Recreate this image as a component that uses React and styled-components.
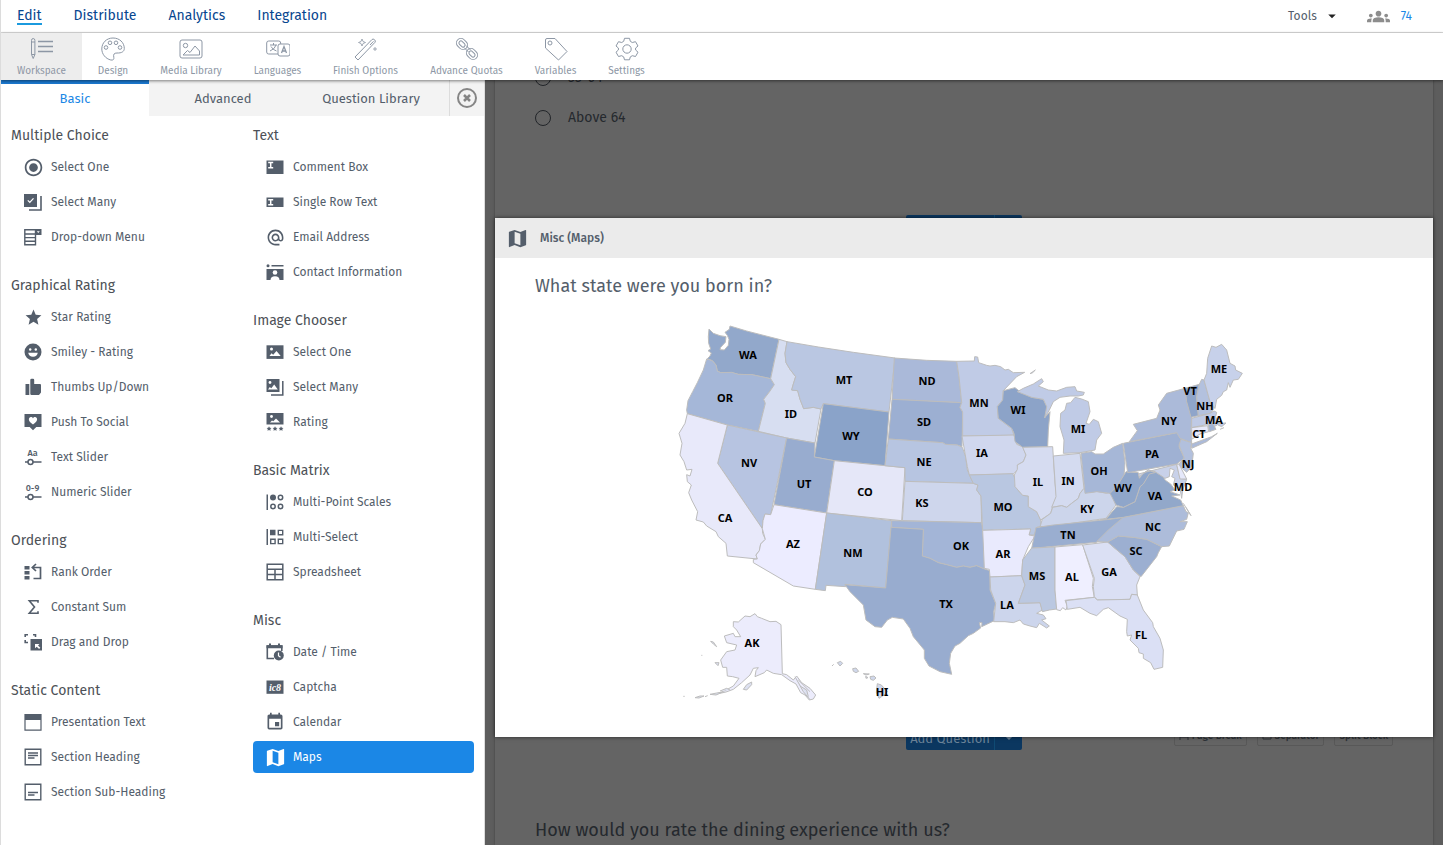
import React from 'react';
import styled, { createGlobalStyle } from 'styled-components';
import {
    MdStar,
    MdRadioButtonChecked,
    MdAlternateEmail,
    MdEvent,
    MdMap,
    MdGroups,
    MdArrowDropDown,
} from 'react-icons/md';

const GlobalStyle = createGlobalStyle`
    * {
        box-sizing: border-box;
    }
    body {
        margin: 0;
        background: #fff;
        color: #545e6b;
        font-family: "Fira Sans", "Open Sans", "Noto Sans", sans-serif;
        font-size: 12px;
    }
    button {
        font: inherit;
        color: inherit;
        border: 0;
        padding: 0;
        background: none;
        cursor: pointer;
    }
    h2, h3, ul {
        margin: 0;
        padding: 0;
        font-weight: 400;
        list-style: none;
    }
`

const Shell = styled.div`
    height: 100vh;
    display: flex;
    flex-direction: column;
    overflow: hidden;
    border-left: 1px solid #dcdcdc;
`

const TopBar = styled.header`
    display: flex;
    justify-content: space-between;
    align-items: center;
    height: 33px;
    flex-shrink: 0;
    padding: 0 31px 0 16px;
    border-bottom: 1px solid #dcdcdc;
`

const TopNav = styled.nav`
    display: flex;
    gap: 32px;
`

const TopLink = styled.a`
    color: #07468f;
    font-size: 14px;
    line-height: 15px;
    text-decoration: none;
    border-bottom: 2px solid ${(props) => (props.$active ? '#1b9ade' : 'transparent')};
`

const TopRight = styled.div`
    display: flex;
    align-items: center;
    gap: 26px;
`

const ToolsButton = styled.button`
    display: flex;
    align-items: center;
    gap: 6px;
    svg {
        color: #222;
    }
`

const UserCount = styled.a`
    display: flex;
    align-items: center;
    gap: 11px;
    color: #1b87e6;
    text-decoration: none;
    svg {
        color: #8d8d8d;
    }
`

const ToolBar = styled.nav`
    position: relative;
    z-index: 2;
    display: flex;
    height: 47px;
    flex-shrink: 0;
    background: #fff;
    box-shadow: 0 1px 3px rgba(0,0,0,0.5);
`

const ToolItem = styled.button`
    width: ${(props) => props.$width}px;
    display: flex;
    flex-direction: column;
    align-items: center;
    gap: 3px;
    padding-top: 4px;
    color: #8d97a5;
    font-size: 10px;
    line-height: 15px;
    white-space: nowrap;
    background: ${(props) => (props.$active ? '#ededed' : 'transparent')};
    svg {
        display: block;
        fill: none;
        stroke: currentColor;
    }
`

const Body = styled.div`
    flex: 1;
    min-height: 0;
    display: flex;
`

const Sidebar = styled.aside`
    width: 484px;
    flex-shrink: 0;
    overflow: hidden;
    background: #fff;
    border-right: 1px solid #dcdcdc;
`

const Tabs = styled.div`
    display: flex;
    height: 36px;
    background: #f3f3f3;
`

const Tab = styled.button`
    width: 148px;
    padding-bottom: 4px;
    font-size: 13px;
    color: ${(props) => (props.$active ? '#1b87e6' : '#545e6b')};
    background: ${(props) => (props.$active ? '#fff' : 'transparent')};
    border-top: 4px solid ${(props) => (props.$active ? '#1b79d0' : 'transparent')};
`

const CloseTab = styled.button`
    width: 35px;
    margin-left: auto;
    display: flex;
    align-items: center;
    justify-content: center;
    border-left: 1px solid #dcdcdc;
`

const Columns = styled.div`
    display: grid;
    grid-template-columns: 1fr 1fr;
    column-gap: 21px;
    padding: 3px 10px;
`

const Group = styled.section`
    margin-bottom: 13px;
    h3 {
        padding-top: 2px;
        font-size: 14px;
        line-height: 30px;
        color: #4d5157;
    }
    li {
        padding-bottom: 3px;
    }
`

const TypeButton = styled.button`
    width: 100%;
    height: 32px;
    display: flex;
    align-items: center;
    gap: 9px;
    padding-left: 13px;
    border-radius: 4px;
    color: ${(props) => (props.$active ? '#fff' : '#545e6b')};
    background: ${(props) => (props.$active ? '#1b87e6' : 'transparent')};
`

const IconSlot = styled.span`
    width: 18px;
    height: 18px;
    display: flex;
    align-items: center;
    justify-content: center;
    svg {
        flex-shrink: 0;
        display: block;
    }
`

const Canvas = styled.main`
    flex: 1;
    min-width: 0;
    overflow: hidden;
    padding: 0 10px;
    background: #5d5d5d;
`

const Page = styled.div`
    display: flow-root;
    min-height: 100%;
    background: #646464;
    box-shadow: 0 0 2px #3c3c3c;
`

const Options = styled.div`
    margin-top: -22px;
    padding: 0 40px 77px;
`

const Option = styled.label`
    display: flex;
    align-items: center;
    gap: 17px;
    height: 40px;
    font-size: 14px;
    line-height: 16px;
    color: #25292e;
    input {
        appearance: none;
        width: 16px;
        height: 16px;
        margin: 0;
        border: 1px solid #222529;
        border-radius: 50%;
    }
`

const ActionRow = styled.div`
    display: grid;
    grid-template-columns: 1fr auto 1fr;
    height: 24px;
    padding: 0 40px;
`

const AddQuestion = styled.div`
    grid-column: 2;
    display: flex;
    overflow: hidden;
    border-radius: 2px;
    color: #6d8499;
    font-size: 13px;
    button {
        width: 88px;
        background: #0b3760;
    }
    button:last-child {
        width: 28px;
        display: flex;
        align-items: center;
        justify-content: center;
        border-left: 1px solid #0f4b74;
    }
`

const BlockActions = styled.div`
    display: flex;
    justify-content: flex-end;
    align-items: flex-start;
    gap: 10px;
`

const BlockButton = styled.button`
    height: 20px;
    padding: 0 4px;
    display: flex;
    align-items: center;
    gap: 3px;
    font-size: 10px;
    font-weight: 500;
    white-space: nowrap;
    color: #2f3338;
    border: 1px solid #585858;
    border-radius: 2px;
    svg {
        fill: none;
        stroke: currentColor;
    }
`

const Question = styled.section`
    position: relative;
    z-index: 1;
    margin: -21px 0 -11px;
    padding-bottom: 27px;
    background: #fff;
    box-shadow: 0 0 4px rgba(0,0,0,0.6);
    h2 {
        padding: 16px 40px 12px;
        font-size: 18px;
        line-height: 24px;
    }
`

const QuestionBar = styled.div`
    display: flex;
    align-items: center;
    gap: 14px;
    height: 40px;
    padding-left: 13px;
    background: #ebebeb;
    font-weight: 500;
`

const Map = styled.svg`
    display: block;
    width: 588px;
    max-width: 100%;
    margin: 0 auto;
    path {
        stroke: #bdbdbd;
        stroke-width: 3;
        stroke-linejoin: round;
    }
    text {
        font-family: "Noto Sans", "Open Sans", sans-serif;
        font-size: 33px;
        font-weight: 700;
        text-anchor: middle;
        fill: #000;
    }
`

const NextQuestion = styled.h2`
    padding: 68px 40px 0;
    font-size: 18px;
    line-height: 24px;
    color: #25292e;
`

function Glyph({ children }) {
    return <svg width="18" height="18" viewBox="0 0 18 18" fill="currentColor" aria-hidden="true">{children}</svg>
}

const line = { fill: 'none', stroke: 'currentColor' };

const glyphs = {
    radio: <MdRadioButtonChecked size={21} />,
    star: <MdStar size={19} />,
    email: <MdAlternateEmail size={19} />,
    sum: <Glyph><path {...line} strokeWidth="1.600" d="M14 4.800V2.800H5.300L10.500 9l-5.200 6.200H14v-2" /></Glyph>,
    calendar: <MdEvent size={20} />,
    map: <MdMap size={23} />,
    selectMany: <Glyph><path d="M0 1h13v13H0z" /><path {...line} strokeWidth="1.6" d="M17 3v14H5" /><path d="M3.8 7.4l2 2 3.7-4" fill="none" stroke="#fff" strokeWidth="1.3" /></Glyph>,
    dropdown: <Glyph><path {...line} strokeWidth="1.4" d="M.8 1.8h10.7v15H.8zM1 6h10.5M1 9.6h10.5M1 13.2h10.5" /><path d="M11 1h6.5v6H11z" /><path d="M12.8 3.2h3L14.3 5z" fill="#fff" /></Glyph>,
    smiley: <Glyph><circle cx="9" cy="9" r="8.5" /><circle cx="6.2" cy="6.5" r="1.2" fill="#fff" /><circle cx="11.8" cy="6.5" r="1.2" fill="#fff" /><path d="M4.2 9.8h9.6a4.9 4.9 0 0 1-9.6 0z" fill="#fff" /></Glyph>,
    thumb: <Glyph><path d="M1.5 6h3.8v11H1.5zM6.3 6.5V2q0-1.2 1.3-1.2H9q1.2 0 1.2 1.2v4H16q1 0 1 1v7.5L15 17H7.5q-1.2 0-1.2-1.2z" /></Glyph>,
    social: <Glyph><path d="M.5 1h17v13h-5.2L9 17.2 5.7 14H.5z" /><path d="M9 11.5C2.500 7.500 5 3.500 7.400 4.100 8.600 4.400 9 5.600 9 5.600s.4-1.200 1.600-1.500C13 3.500 15.500 7.500 9 11.500z" fill="#fff" /></Glyph>,
    textSlider: <Glyph><text x="8.500" y="7.500" fontSize="9" fontWeight="500" textAnchor="middle">Aa</text><path {...line} strokeWidth="1.500" d="M1 14h3m5 0h8.500" /><circle {...line} strokeWidth="1.500" cx="6.500" cy="14" r="2.500" /></Glyph>,
    numSlider: <Glyph><text x="8.500" y="7.500" fontSize="9" fontWeight="500" textAnchor="middle">0-9</text><path {...line} strokeWidth="1.500" d="M1 14h3m5 0h8.500" /><circle {...line} strokeWidth="1.500" cx="6.500" cy="14" r="2.500" /></Glyph>,
    rank: <Glyph><path d="M.5 3h5v3.400h-5zM.5 8h5v3.400h-5zM.5 13h5v3.400h-5z" /><path {...line} strokeWidth="1.700" d="M12 1L8.300 4.500 12 8M8.500 4.500H16.500v11H9.500" /></Glyph>,
    drag: <Glyph><path d="M6.500 6h11.500v11.500H6.500z" /><path {...line} strokeWidth="1.600" d="M1.200 4V1.800H4M9 1.800h2.500V4M1.200 7v2.500H4" /><path d="M11 11h4.500l-1.500 1.500 2.300 2.300-1.200 1.200-2.400-2.300L11 15.200z" fill="#fff" /></Glyph>,
    presentation: <Glyph><path {...line} strokeWidth="1.200" d="M1 1.600h16v15.500H1z" /><path d="M1 1h16v6H1z" /></Glyph>,
    heading: <Glyph><path {...line} strokeWidth="1.400" d="M1.200 1.200h15.600v15.600H1.200zM4 5h10M4 7.500h10M4 10h6.500" /></Glyph>,
    subHeading: <Glyph><path {...line} strokeWidth="1.400" d="M1.200 1.200h15.600v15.600H1.200zM4 9.500h10M4 12h6.500" /></Glyph>,
    comment: <Glyph><path d="M.5 2.500h17v13.500H.5z" /><path d="M2.200 4.500h5M2.200 9.700h5M4.700 4.500v5" fill="none" stroke="#fff" strokeWidth="1.500" /></Glyph>,
    singleRow: <Glyph><path d="M.5 4.500h17v9.500H.5z" /><path d="M2.200 6.700h5M2.200 11.700h5M4.700 6.700v5" fill="none" stroke="#fff" strokeWidth="1.500" /></Glyph>,
    contact: <Glyph><circle cx="2" cy="2.800" r="1.500" /><path d="M5.500 2.100h12v1.500h-12zM.5 6h17v11H.5z" /><circle cx="9" cy="9.500" r="2.300" fill="#fff" /><path d="M4.500 17q0-3.800 4.500-3.800t4.500 3.800z" fill="#fff" /></Glyph>,
    imageOne: <Glyph><path d="M.5 2.300h17v13.600H.5z" /><circle cx="5.500" cy="6" r="1.500" fill="#fff" /><path d="M3.500 13l2-2.700 1.700 1.500L10.500 8l4.200 5z" fill="#fff" /></Glyph>,
    imageMany: <Glyph><path d="M.5 1h13v13H.5z" /><path {...line} strokeWidth="1.500" d="M16.800 3v14H5" /><circle cx="4" cy="4.500" r="1.400" fill="#fff" /><path d="M2 11.500l1.800-2.500 1.500 1.200L8.200 6.500l3.600 5z" fill="#fff" /></Glyph>,
    imageRating: <Glyph><path d="M.5 0h17v11.500H.5z" /><circle cx="5.500" cy="3.500" r="1.400" fill="#fff" /><path d="M4 9.500L6 7.400l1.300.9L10 5.500l4 4z" fill="#fff" />{[3, 9, 15].map(x => <path key={x} d={`M${x} 13.200l.8 1.500 1.700.2-1.200 1.200.3 1.700-1.600-.8-1.500.8.300-1.700-1.200-1.200 1.700-.2z`} />)}</Glyph>,
    points: <Glyph><path d="M.5 1.500h1.500v15.500H.5z" /><circle cx="7" cy="4.500" r="3" /><g {...line} strokeWidth="1.500"><circle cx="14.500" cy="4.500" r="2.200" /><circle cx="7" cy="13.500" r="2.200" /><circle cx="14.500" cy="13.500" r="2.200" /></g></Glyph>,
    multiSelect: <Glyph><path d="M.5 1h1.500v16H.5zM4 1.800h5.500v5.500H4z" /><path {...line} strokeWidth="1.400" d="M12.300 2.400h4.400v4.400h-4.400zM4.700 11.200h4.400v4.400H4.700zM12.300 11.200h4.400v4.400h-4.400z" /></Glyph>,
    sheet: <Glyph><path {...line} strokeWidth="1.500" d="M1.200 1.200h15.600v15.600H1.200zM1 6.200h16M1 11.500h16M9 6.200v10.500" /></Glyph>,
    dateTime: <Glyph><path {...line} strokeWidth="1.600" d="M8 15.500H1.300V3h14.500v5" /><path d="M.5 2.300h16v3H.5zM3 .5h2v3H3zM12 .5h2v3h-2z" /><circle cx="12.800" cy="12.500" r="5" /><path d="M12.500 9.500v3.200l2 1.500" fill="none" stroke="#fff" strokeWidth="1.200" /></Glyph>,
    captcha: <Glyph><path d="M.5 2.500h17v13.300H.5z" /><text x="9" y="12.500" fontSize="10" fontWeight="700" fontStyle="italic" fontFamily="Liberation Serif, serif" textAnchor="middle" fill="#fff">ic8</text></Glyph>,
};

const leftGroups = [
    { title: 'Multiple Choice', items: [['radio', 'Select One'], ['selectMany', 'Select Many'], ['dropdown', 'Drop-down Menu']] },
    { title: 'Graphical Rating', items: [['star', 'Star Rating'], ['smiley', 'Smiley - Rating'], ['thumb', 'Thumbs Up/Down'], ['social', 'Push To Social'], ['textSlider', 'Text Slider'], ['numSlider', 'Numeric Slider']] },
    { title: 'Ordering', items: [['rank', 'Rank Order'], ['sum', 'Constant Sum'], ['drag', 'Drag and Drop']] },
    { title: 'Static Content', items: [['presentation', 'Presentation Text'], ['heading', 'Section Heading'], ['subHeading', 'Section Sub-Heading']] },
];

const rightGroups = [
    { title: 'Text', items: [['comment', 'Comment Box'], ['singleRow', 'Single Row Text'], ['email', 'Email Address'], ['contact', 'Contact Information']] },
    { title: 'Image Chooser', items: [['imageOne', 'Select One'], ['imageMany', 'Select Many'], ['imageRating', 'Rating']] },
    { title: 'Basic Matrix', items: [['points', 'Multi-Point Scales'], ['multiSelect', 'Multi-Select'], ['sheet', 'Spreadsheet']] },
    { title: 'Misc', items: [['dateTime', 'Date / Time'], ['captcha', 'Captcha'], ['calendar', 'Calendar'], ['map', 'Maps']] },
];

const tools = [
    { name: 'Workspace', width: 81, icon: <><path d="M1.500 3.500q0-2 1.700-2t1.700 2v14l-1.700 4-1.700-4zM1.500 5h3.400M1.500 17.500h3.400" /><path strokeWidth="1.400" d="M8 4.500h15M8 9.500h15M8 14.500h15" /></> },
    { name: 'Design', width: 62, icon: <><path d="M12 1C5.500 1 .8 5.800.8 12c0 5 3.700 9.700 9 11 2.400.5 3.400-.8 3-2.700-.7-3 .3-4.300 3.200-4.300 4.700.2 7.300-1.500 7.300-4.500C23.300 5.500 18.500 1 12 1z" /><circle cx="5" cy="10.500" r="1.800" /><circle cx="9" cy="5.800" r="1.800" /><circle cx="15" cy="5.800" r="1.800" /><circle cx="19" cy="10.500" r="1.800" /></> },
    { name: 'Media Library', width: 94, icon: <><rect x="1" y="3" width="22" height="18" rx="2" /><circle cx="6.500" cy="8.500" r="2.200" /><path d="M4 18l4.500-4.500 2.500 2 5-6.500 4.500 5v4H4z" /></> },
    { name: 'Languages', width: 79, icon: <><rect x=".7" y="4" width="14" height="13" rx="2" fill="#fff" /><path d="M4 8h7M7.500 6v2M10 8q-1 4-6 6M5 9.500q2 3.500 5.500 4.500" /><rect x="12" y="7" width="12" height="12" rx="2" fill="#fff" /><path strokeWidth="1.300" d="M15.500 16l2.500-6.500 2.500 6.500M16.300 14h3.400" /></> },
    { name: 'Finish Options', width: 97, icon: <><path d="M1 20L18 2.500q1-1 2.500.2 1.500 1.300.5 2.600L4 23zM16 8L19.500 4.300" /><path strokeWidth=".8" d="M8 2l1 2.500L11.500 5.500 9 6.500 8 9 7 6.500 4.500 5.500 7 4.500zM21 10v4M19 12h4" /></> },
    { name: 'Advance Quotas', width: 105, icon: <><rect x="-6" y="-4.500" width="12" height="9" rx="4.500" transform="translate(7 7) rotate(45)" /><rect x="-3.500" y="-2" width="7" height="4" rx="2" transform="translate(7 7) rotate(45)" /><rect x="-6" y="-4.500" width="12" height="9" rx="4.500" transform="translate(17 17) rotate(45)" /><rect x="-3.500" y="-2" width="7" height="4" rx="2" transform="translate(17 17) rotate(45)" /><path d="M9 10.500l4.500 4.500M11 8.500l4.500 4.500" /></> },
    { name: 'Variables', width: 73, icon: <><path d="M1.500 3q0-1.500 1.500-1.500h8L23 14.500 14.500 23 1.500 11z" /><circle cx="6" cy="6" r="2" /></> },
    { name: 'Settings', width: 69, icon: <><path d="M9.500 1.300h5l.8 3 2 1.200 3.200-.8 2.500 4.300-2.400 2v2l2.400 2.200-2.500 4.300-3.200-.8-2 1.200-.8 2.900h-5l-.8-2.900-2-1.200-3.200.8L1 15.200 3.400 13v-2L1 9l2.500-4.300 3.200.8 2-1.200z" /><circle cx="12" cy="12" r="4.200" /></> },
];

// outlines are kept in map units, grouped by region with the region's offset
const regions = [
    {
        x: 0, y: 0, shapes: [
            ['#92a8cb', 'M117 57L130 70 150 77 168 80 166 97 152 112 150 119 163 120 175 106 177 88 172 76 165 67 178 58 180 48 230 63 327 88 302 206 246 194 205 193 185 188 152 188 142 183 138 165 127 152 112 146 120 138 124 129 114 122 122 117 116 100 115 80z'],
            ['#a5b7d8', 'M110 147L127 152 138 165 142 183 152 188 185 187 205 193 246 194 302 206 313 224 298 246 281 268 286 280 265 364 172 345 52 311 50 300 54 272 68 245 82 218 100 180z'],
            ['#d7def1', 'M327 88L351 95 345 130 348 158 360 178 377 200 370 222 365 240 383 242 390 268 397 285 401 296 430 292 453 297 435 399 350 384 265 364 286 280 281 268 298 246 313 224 302 206z'],
            ['#bac7e2', 'M351 95L445 111 550 127 675 144 657 306 560 294 460 281 453 297 430 292 401 296 390 268 383 242 365 240 370 222 377 200 360 178 348 158 345 130z'],
            ['#8aa3c9', 'M460 281L657 306 645 467 493 452 433 441z'],
            ['#b7c4e1', 'M172 345L350 384 302 614 285 612 279 632 277 656 143 460z'],
            ['#98accf', 'M350 384L435 399 433 441 493 452 470 609 312 584z'],
            ['#e5e7f8', 'M493 452L705 473 695 632 470 609z'],
            ['#e8e9fa', 'M52 311L172 345 143 460 277 656 278 670 286 688 272 702 268 722 258 735 262 747 172 738 168 700 145 680 138 665 110 648 100 636 78 630 83 605 65 570 56 548 64 525 52 515 50 494 60 498 66 478 50 480 42 455 30 435 36 400 27 370 45 340z'],
            ['#ececff', 'M312 584L470 609 436 838 370 828 250 758 250 748 262 747 258 735 268 722 272 702 286 688 277 656 279 632 285 612 302 614z'],
            ['#b1c1dd', 'M470 609L665 632 647 834 525 823 527 830 468 826 466 842 436 838z'],
        ],
    },
    {
        x: 630, y: 0, shapes: [
            ['#aab9d9', 'M43 144L140 151 230 154 237 200 245 278 36 268z'],
            ['#9cafd2', 'M36 268L245 278 240 292 248 306 246 410 232 405 196 403 188 398 25 387z'],
            ['#b7c5e1', 'M25 387L188 398 196 403 232 405 247 412 257 440 262 480 280 520 75 514 75 473 15 467z'],
            ['#ced6ec', 'M75 514L280 520 294 525 290 540 303 558 305 638 67 632z'],
            ['#a3b5d7', 'M35 632L305 638 312 700 313 777 290 767 270 772 250 768 230 772 200 764 175 758 150 745 127 738 130 658 35 652z'],
            ['#98accf', 'M33 652L130 658 127 738 150 745 175 758 200 764 230 772 250 768 270 772 290 767 313 777 330 782 330 840 347 880 341 905 343 932 305 950 306 938 298 938 302 954 280 970 265 977 240 1000 225 1008 212 1030 208 1060 215 1093 180 1085 147 1068 133 1045 133 1020 100 980 90 955 70 927 37 922 22 930 5 952 -15 950 -42 930 -50 885 -90 845 -105 824 17 834z'],
            ['#c0cbe6', 'M230 154L283 153 284 140 293 141 296 158 320 166 330 168 345 166 362 170 375 180 385 178 400 188 434 187 410 200 370 242 368 270 352 290 355 325 395 355 402 376 248 378 248 306 240 292 245 278 237 200z'],
            ['#d0d7ee', 'M246 378L402 375 410 403 428 410 438 435 430 455 412 465 414 478 400 492 268 495 262 470 255 430z'],
            ['#b9c7e1', 'M268 495L398 491 408 510 405 530 428 556 445 558 445 590 470 605 482 630 484 648 468 653 465 675 447 675 452 657 308 661 303 558 290 540 294 525 280 520z'],
            ['#e9eafd', 'M308 661L452 657 447 675 465 678 445 710 428 750 425 797 330 801 328 778 313 775z'],
            ['#ccd5ec', 'M330 801L425 797 435 825 415 880 480 878 487 900 470 910 490 915 498 926 485 930 508 948 500 954 478 940 470 953 450 948 430 942 420 930 400 938 375 935 341 935 347 880 332 840z'],
            ['#8ca3c8', 'M370 242L405 233 420 245 455 262 490 268 502 290 495 322 510 305 505 360 503 410 428 412 405 395 402 370 395 355 355 325 352 290 368 270z'],
            ['#d6dcf1', 'M428 412L518 410 525 520 530 560 518 590 512 610 482 630 470 605 445 590 445 558 428 556 405 530 403 495 412 478 412 465 430 455 438 435z'],
            ['#d4dbf0', 'M520 438L600 430 612 535 600 550 595 565 575 580 560 592 545 587 515 592 528 560z'],
            ['#c0cbe6', 'M550 430L552 390 540 350 542 310 555 300 560 280 572 278 585 262 605 267 625 275 630 305 618 340 628 343 640 328 655 335 665 370 650 390 645 420 600 428z'],
            ['#c0cbe6', 'M412 245L430 235 460 222 485 206 490 215 475 228 505 240 530 243 560 232 585 230 590 243 613 247 610 255 595 258 570 258 540 262 520 275 508 300 494 324 500 290 490 268 455 262z'],
            ['#c0cbe6', 'M450 191L466 180 458 188z'],
            ['#ccd5eb', 'M480 650L487 628 512 610 518 592 545 587 560 592 575 580 595 565 600 550 612 535 630 548 650 544 680 550 690 545 708 585 678 625 520 648z'],
            ['#9aaed0', 'M468 653L520 645 690 628 730 622 715 645 650 697 455 715z'],
            ['#bbc8e1', 'M455 714L525 711 525 840 530 897 508 900 487 905 480 878 415 880 435 825 425 797 428 750z'],
            ['#efefff', 'M525 711L608 704 640 805 637 830 643 862 555 871 562 888 558 900 548 893 541 902 530 899 525 840z'],
        ],
    },
    {
        x: 1230, y: 60, shapes: [
            ['#a6b7d7', 'M3 370L35 365 45 372 70 372 100 352 128 340 135 400 132 435 110 470 90 490 50 485 15 490z'],
            ['#dbe0f4', 'M8 645L83 636 105 655 135 680 160 720 180 740 170 765 172 795 155 793 150 808 52 810 43 800 40 770 43 745z'],
            ['#dbe0f5', 'M-42 812L43 802 52 810 150 808 155 793 172 795 190 840 218 878 220 890 240 925 250 960 248 1012 222 1018 212 998 190 985 190 972 177 968 175 955 150 930 155 915 142 918 140 905 142 868 120 858 85 833 70 838 50 857 30 850 0 832 -38 838z'],
            ['#9cafd1', 'M83 636L115 618 160 622 175 624 200 628 245 650 235 668 230 680 183 740 160 720 135 680 105 655z'],
            ['#adbcda', 'M50 635L85 600 130 562 310 527 318 545 325 548 320 568 300 575 322 575 312 598 290 603 268 648 245 650 200 628 160 622 115 618 83 636z'],
            ['#92a8ca', 'M78 567L110 530 130 532 165 515 180 470 190 460 208 430 225 425 250 440 255 450 272 462 285 480 270 485 300 495 275 498 302 510 310 527 130 562 60 570z'],
            ['#8fa6ca', 'M90 490L110 470 132 435 138 425 175 428 178 445 190 430 205 420 225 428 208 432 190 462 180 470 165 515 130 532 108 525z'],
            ['#9fb1d3', 'M130 340L290 308 305 325 297 350 313 385 290 402 143 428z'],
            ['#abbad9', 'M148 335L172 302 160 283 230 265 240 240 235 225 260 190 315 175 320 215 335 260 333 300 335 338 300 325 290 308z'],
            ['#abbad9', 'M335 342L395 320 412 310 380 335 335 355z'],
            ['#8fa5ca', 'M315 175L358 163 350 200 355 257 333 262 320 215z'],
            ['#b3c1de', 'M358 163L365 148 372 150 390 215 402 235 392 250 355 257 350 200z'],
            ['#c7d1ea', 'M372 150L380 130 383 85 395 48 408 52 425 43 440 60 450 100 465 108 467 120 487 130 475 148 460 150 450 172 445 158 440 180 430 185 425 196 410 208 405 235 390 215z'],
            ['#bfcae5', 'M335 265L390 250 402 243 410 247 407 260 415 280 438 279 425 290 412 284 400 292 385 283 335 293z'],
            ['#e7e9fa', 'M335 293L383 287 386 305 360 312 335 328z'],
            ['#a0b2d3', 'M385 285L398 280 408 298 388 305z'],
            ['#b2c0dd', 'M297 345L303 328 335 338 332 355 340 370 335 410 320 427 295 405 313 385z'],
            ['#c8d1e9', 'M175 432L290 403 300 445 320 448 308 480 305 505 300 475 280 465 285 445 275 440 283 420 270 415 268 440 255 445 225 425 205 420 178 440z'],
            ['#e5e8fa', 'M290 403L297 402 320 447 300 447z'],
            ['none', 'M310 520L333 557 318 532M420 298L432 293'],
        ],
    },
    {
        x: 0, y: 810, shapes: [
            ['#ececfc', 'M190 125L205 126 225 108 240 110 255 101 262 110 275 115 300 125 318 124 333 134 337 281 350 284 370 300 380 288 395 308 420 325 437 345 430 357 418 360 405 345 392 338 378 312 360 302 335 284 310 280 290 270 283 278 255 290 258 272 265 263 250 265 240 285 215 308 190 328 168 336 140 342 165 332 190 318 207 295 188 290 172 288 170 262 158 262 152 240 170 215 195 210 200 195 170 188 163 168 190 160 195 170 212 170 200 150 190 140z'],
            ['#dde1f1', 'M220 328l10-14 15-8 0 8-15 16zM135 248l12 0-3 9zM122 184l8 2 10 14-10-8zM375 290l25 45 20 24M385 300l35 35M390 318l20 12 5 20'],
            ['#dde1f1', 'M75 353l15-5 12 0-15 6zM105 350l8-3M120 343l20-4 18-3-20 9zM40 349h4M94 226h3M150 333l20-8 10 5'],
            ['#d0d8ec', 'M502 248l10-4 6 6-8 8zM548 266l10-2 8 10-8 4-8-4zM486 258l5-5M580 281l18 1-10 3zM587 289l7 4-6 2zM600 290l12-2 6 6-8 7-8-3zM622 311l12 4 18 20-10 10-15 10-8-18z'],
        ],
    },
];

const labels = [
    ['WA', 748, 355], ['OR', 725, 398], ['ID', 791, 414], ['MT', 844, 380], ['WY', 851, 436], ['NV', 749, 463],
    ['UT', 804, 484], ['CO', 865, 492], ['CA', 725, 518], ['AZ', 793, 544], ['NM', 853, 553], ['ND', 927, 381],
    ['SD', 924, 422], ['NE', 924, 462], ['KS', 922, 503], ['OK', 961, 546], ['TX', 946, 604], ['MN', 979, 403],
    ['IA', 982, 453], ['MO', 1003, 507], ['AR', 1003, 554], ['LA', 1007, 605], ['WI', 1018, 410], ['IL', 1038, 482],
    ['IN', 1068, 481], ['MI', 1078, 429], ['OH', 1099, 471], ['KY', 1087, 509], ['TN', 1068, 535], ['MS', 1037, 576],
    ['AL', 1072, 577], ['GA', 1109, 572], ['FL', 1141, 635], ['SC', 1136, 551], ['NC', 1153, 527], ['VA', 1155, 496],
    ['WV', 1123, 488], ['PA', 1152, 454], ['NY', 1169, 421], ['VT', 1190, 391], ['NH', 1205, 406], ['ME', 1219, 369],
    ['MA', 1214, 420], ['CT', 1199, 434], ['NJ', 1188, 464], ['MD', 1183, 487], ['AK', 752, 643], ['HI', 882, 692],
];

function StateMap() {
    return (
        <Map viewBox="0 0 1764 1200" role="img" aria-label="Map of the United States">
            {regions.map(region =>
                <g key={`${region.x}-${region.y}`} transform={`translate(${region.x} ${region.y})`}>
                    {region.shapes.map(([fill, d]) => <path key={d} fill={fill} d={d} />)}
                </g>
            )}
            {labels.map(([name, x, y]) =>
                <text key={name} x={(x - 670) * 3} y={(y - 306) * 3}>{name}</text>
            )}
        </Map>
    )
}

function TypeColumn({ groups }) {
    return (
        <div>
            {groups.map(group =>
                <Group key={group.title}>
                    <h3>{group.title}</h3>
                    <ul>
                        {group.items.map(([icon, name]) =>
                            <li key={name}>
                                <TypeButton $active={name === 'Maps'}>
                                    <IconSlot>{glyphs[icon]}</IconSlot>
                                    {name}
                                </TypeButton>
                            </li>
                        )}
                    </ul>
                </Group>
            )}
        </div>
    )
}

function AddButton() {
    return (
        <AddQuestion>
            <button>Add Question</button>
            <button aria-label="More question types"><MdArrowDropDown size={16} /></button>
        </AddQuestion>
    )
}

function App() {
    return (
        <Shell>
            <GlobalStyle />
            <TopBar>
                <TopNav>
                    {['Edit', 'Distribute', 'Analytics', 'Integration'].map(name =>
                        <TopLink key={name} href="#" $active={name === 'Edit'}>{name}</TopLink>
                    )}
                </TopNav>
                <TopRight>
                    <ToolsButton>Tools <MdArrowDropDown size={18} /></ToolsButton>
                    <UserCount href="#"><MdGroups size={23} />74</UserCount>
                </TopRight>
            </TopBar>
            <ToolBar>
                {tools.map(tool =>
                    <ToolItem key={tool.name} $width={tool.width} $active={tool.name === 'Workspace'}>
                        <svg width="24" height="24" viewBox="0 0 24 24" aria-hidden="true">{tool.icon}</svg>
                        {tool.name}
                    </ToolItem>
                )}
            </ToolBar>
            <Body>
                <Sidebar>
                    <Tabs>
                        <Tab $active>Basic</Tab>
                        <Tab>Advanced</Tab>
                        <Tab>Question Library</Tab>
                        <CloseTab aria-label="Close">
                            <svg width="20" height="20" viewBox="0 0 20 20" fill="none" stroke="#858585">
                                <circle cx="10" cy="10" r="9" strokeWidth="2" />
                                <path d="M7 7l6 6M13 7l-6 6" strokeWidth="2.500" />
                            </svg>
                        </CloseTab>
                    </Tabs>
                    <Columns>
                        <TypeColumn groups={leftGroups} />
                        <TypeColumn groups={rightGroups} />
                    </Columns>
                </Sidebar>
                <Canvas>
                    <Page>
                        <Options>
                            <Option><input type="radio" name="age" />55-64</Option>
                            <Option><input type="radio" name="age" />Above 64</Option>
                        </Options>
                        <ActionRow><AddButton /></ActionRow>
                        <Question>
                            <QuestionBar><IconSlot><MdMap size={23} /></IconSlot>Misc (Maps)</QuestionBar>
                            <h2>What state were you born in?</h2>
                            <StateMap />
                        </Question>
                        <ActionRow>
                            <AddButton />
                            <BlockActions>
                                <BlockButton>
                                    <svg width="10" height="10" viewBox="0 0 10 10" aria-hidden="true"><path d="M1 1v3h8V1M1 9V6h8v3" /></svg>
                                    Page Break
                                </BlockButton>
                                <BlockButton>
                                    <svg width="10" height="10" viewBox="0 0 10 10" aria-hidden="true"><path d="M1 1h8v7H1zM3 5h4" /></svg>
                                    Separator
                                </BlockButton>
                                <BlockButton>Split Block</BlockButton>
                            </BlockActions>
                        </ActionRow>
                        <NextQuestion>How would you rate the dining experience with us?</NextQuestion>
                    </Page>
                </Canvas>
            </Body>
        </Shell>
    )
}

export default App
